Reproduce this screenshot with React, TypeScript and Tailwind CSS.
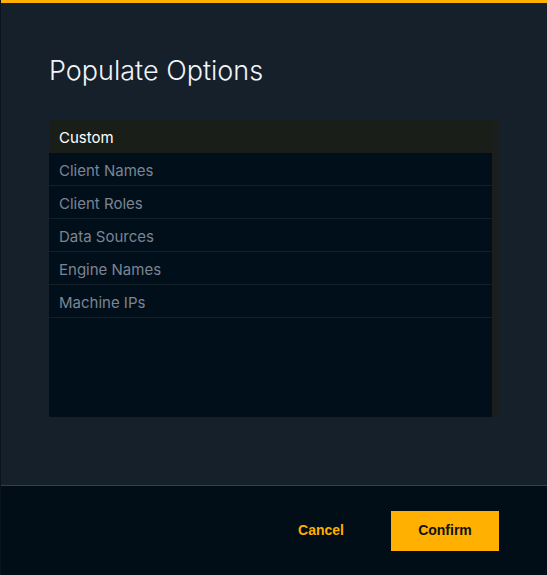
const options = ["Client Names", "Client Roles", "Data Sources", "Engine Names", "Machine IPs"];

export default function App() {
  return (
    <div
      className="flex flex-col w-[547px] h-[575px] bg-[#15202b] border-l border-[#0b141c]"
      style={{ fontFamily: "Inter, 'Noto Sans', sans-serif" }}
    >
      <div className="h-[3px] bg-[#ffb000] shrink-0" />

      <div className="flex flex-col flex-1 px-12">
        <h1 className="mt-[52px] text-[27px] leading-8 font-light text-[#f2f4f8]">
          Populate Options
        </h1>

        <div className="mt-[33px] flex w-[450px] h-[297px] bg-[#010f1a]">
          <ul className="flex flex-col flex-1">
            <li className="h-[33px] flex items-center pl-[10px] pt-[4px] text-[15px] text-white bg-[#1a1e19]">
              Custom
            </li>
            {options.map((o) => (
              <li
                key={o}
                className="h-[33px] flex items-center pl-[10px] pt-[4px] text-[15px] text-[#7b8592] border-b border-[#132029]"
              >
                {o}
              </li>
            ))}
          </ul>
          <div className="w-[7px] bg-[#1a1f1e]" />
        </div>
      </div>

      <div className="h-[90px] shrink-0 flex items-center justify-end gap-[47px] pr-12 bg-[#010d17] border-t border-[#4a3d1c]">
        <button
          className="text-[14px] font-bold text-[#ffb000]"
          style={{ fontFamily: "'Liberation Sans', Arial, sans-serif" }}
        >
          Cancel
        </button>
        <button
          className="w-[108px] h-[40px] bg-[#ffb000] text-[14px] font-bold text-[#111]"
          style={{ fontFamily: "'Liberation Sans', Arial, sans-serif" }}
        >
          Confirm
        </button>
      </div>
    </div>
  );
}
